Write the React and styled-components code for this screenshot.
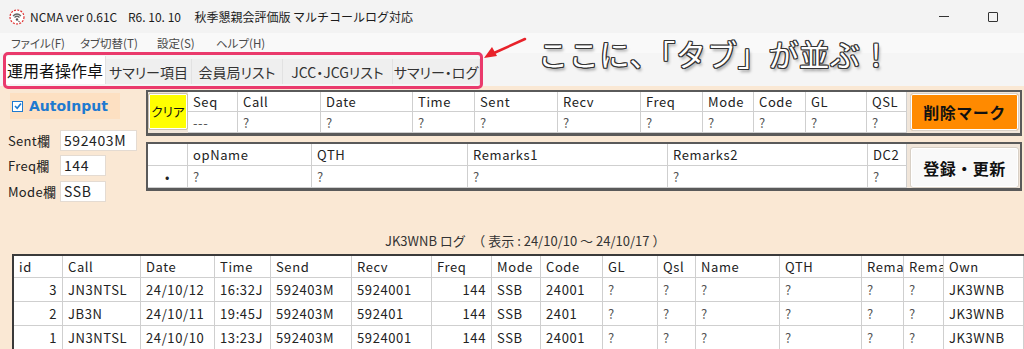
import React from "react";
import styled, { createGlobalStyle } from "styled-components";

const GlobalStyle = createGlobalStyle`
  html, body { margin: 0; padding: 0; }
  body {
    font-family: "Noto Sans CJK JP", "Noto Sans", sans-serif;
    background: #fae8d4;
  }
  * { box-sizing: border-box; }
`;

const Window = styled.div`
  position: relative;
  width: 1024px;
  height: 349px;
  overflow: hidden;
  display: flex;
  flex-direction: column;
  background: #fae8d4;
`;

const TitleBar = styled.div`
  height: 33px;
  flex-shrink: 0;
  display: flex;
  align-items: center;
  padding-left: 9px;
  background: #f3f3f3;
  font-size: 12px;
  color: #1b1b1b;
  white-space: pre;
`;

const TitleText = styled.span`
  margin-left: 5px;
`;

const Controls = styled.div`
  margin-left: auto;
  display: flex;
  height: 100%;
  margin-right: -42px;
`;

const CtrlBtn = styled.div`
  width: 49px;
  height: 100%;
  display: flex;
  align-items: center;
  justify-content: center;
`;

const MinLine = styled.div`
  width: 10px;
  height: 1px;
  background: #333;
`;

const MaxBox = styled.div`
  width: 10px;
  height: 10px;
  border: 1px solid #333;
  border-radius: 1px;
`;

const MenuBar = styled.div`
  height: 20px;
  flex-shrink: 0;
  display: flex;
  align-items: center;
  padding-left: 11px;
  background: #f9f9f9;
  font-size: 11.5px;
  color: #4a4a4a;
  font-feature-settings: "palt";
`;

const MenuItem = styled.span`
  width: ${(p) => p.w}px;
`;

const TabRow = styled.div`
  height: 33px;
  flex-shrink: 0;
  display: flex;
  align-items: flex-end;
  padding: 0 0 2px 5px;
  background: #f5f5f5;
`;

const Tab = styled.div`
  width: ${(p) => p.w}px;
  height: ${(p) => (p.active ? 28 : 25)}px;
  display: flex;
  align-items: center;
  justify-content: center;
  background: ${(p) => (p.active ? "#ffffff" : "#efefef")};
  border-right: 1px solid #e2e2e2;
  font-size: ${(p) => (p.active ? 16 : 14)}px;
  color: ${(p) => (p.active ? "#111" : "#333")};
  white-space: nowrap;
  font-feature-settings: "palt";
`;

const Content = styled.div`
  flex: 1;
  padding-top: 4px;
  background: #fae8d4;
  display: flex;
  flex-direction: column;
`;

const TopArea = styled.div`
  display: flex;
`;

const LeftPanel = styled.div`
  width: 146px;
  padding-left: 8px;
  display: flex;
  flex-direction: column;
`;

const AutoBox = styled.div`
  margin: 3px 0 0 2px;
  width: 110px;
  height: 26px;
  background: #fde0c2;
  display: flex;
  align-items: center;
  padding-left: 2px;
  color: #1f7ad0;
  font-family: "DejaVu Sans", sans-serif;
  font-weight: bold;
  font-size: 14px;
`;

const Check = styled.span`
  width: 11px;
  height: 11px;
  border: 1.5px solid #1f7ad0;
  background: #fff;
  margin-right: 6px;
  display: flex;
  align-items: center;
  justify-content: center;
`;

const FieldRow = styled.div`
  display: flex;
  align-items: center;
  margin-top: ${(p) => p.mt}px;
`;

const FieldLabel = styled.span`
  width: 52px;
  font-size: 13px;
  letter-spacing: 0.3px;
  color: #222;
  white-space: nowrap;
`;

const InputBox = styled.div`
  width: ${(p) => p.w}px;
  height: 21px;
  background: #fff;
  border: 1px solid #e4dbd2;
  font-size: 14px;
  letter-spacing: 0.6px;
  line-height: 19px;
  padding-left: 3px;
  color: #222;
`;

const GridCol = styled.div`
  width: 876px;
  display: flex;
  flex-direction: column;
`;

const EditGrid = styled.div`
  display: flex;
  border: 2px solid #5a5a5a;
  border-bottom-width: 3px;
  background: #f1e6da;
  margin-top: ${(p) => p.mt}px;
`;

const CellTable = styled.div`
  display: grid;
  grid-template-columns: ${(p) => p.cols};
  grid-auto-rows: ${(p) => p.rows};
  background: #fff;
`;

const Cell = styled.div`
  border-right: 1px solid #cfcfcf;
  border-bottom: 1px solid #cfcfcf;
  font-size: 13px;
  letter-spacing: 0.6px;
  color: ${(p) => (p.muted ? "#555" : "#222")};
  padding-left: 5px;
  display: flex;
  align-items: center;
  white-space: nowrap;
  overflow: hidden;
  justify-content: ${(p) => (p.right ? "flex-end" : "flex-start")};
  padding-right: ${(p) => (p.right ? 5 : 0)}px;
  ${(p) => p.center && "justify-content: center; padding-left: 0;"}
`;

const ClearBtn = styled.div`
  width: 40px;
  height: 37px;
  margin: 1px 0 0 0;
  background: #ffff00;
  border: 1px solid #c9c0b0;
  border-radius: 2px;
  box-shadow: inset 0 0 0 1px #fff;
  display: flex;
  align-items: center;
  justify-content: center;
  font-size: 12.5px;
  color: #111;
  font-feature-settings: "palt";
`;

const ActionBtn = styled.div`
  width: 109px;
  height: ${(p) => p.h}px;
  margin: ${(p) => p.mt}px 0 0 3px;
  background: ${(p) => p.bg};
  border: 1px solid #d8d0c6;
  border-radius: 3px;
  box-shadow: inset 0 0 0 1px #fff;
  display: flex;
  align-items: center;
  justify-content: center;
  font-size: 16px;
  font-weight: bold;
  color: #111;
  letter-spacing: 0.5px;
`;

const LogTitle = styled.div`
  margin-top: 30px;
  height: 18px;
  line-height: 18px;
  padding-left: 385px;
  font-size: 13px;
  color: #333;
  white-space: pre;
`;

const LogTable = styled.div`
  margin: 4px 0 0 12px;
  border-top: 2px solid #3a3a3a;
  border-left: 2px solid #3a3a3a;
  background: #fff;
  display: grid;
  grid-template-columns: 49px 78px 74px 56px 81px 80px 60px 49px 62px 55px 38px 84px 82px 42px 40px 80px;
  grid-template-rows: 22px 24px 24px 24px;
`;

const Callout = styled.div`
  position: absolute;
  left: 538px;
  top: 31px;
  font-size: 30px;
  color: #fff;
  letter-spacing: 0.8px;
  text-shadow: -1px -1px 0 #333, 1px -1px 0 #333, -1px 1px 0 #333, 1px 1px 0 #333,
    0 -1px 0 #333, 0 1px 0 #333, -1px 0 0 #333, 1px 0 0 #333, 2px 3px 3px rgba(0, 0, 0, 0.35);
  white-space: nowrap;
`;

const Highlight = styled.div`
  position: absolute;
  left: 3px;
  top: 52px;
  width: 480px;
  height: 37px;
  border: 3px solid #ea3a6c;
  border-radius: 5px;
`;

const Arrow = styled.svg`
  position: absolute;
  left: 480px;
  top: 34px;
`;

function AppIcon() {
  return (
    <svg width="16" height="16" viewBox="0 0 16 16">
      <circle cx="8" cy="8" r="7" fill="#fff" stroke="#e03030" strokeWidth="1.2" strokeDasharray="2 1.3" />
      <path d="M4 7 Q8 3 12 7" stroke="#666" strokeWidth="1.2" fill="none" />
      <path d="M5.5 8.5 Q8 6 10.5 8.5" stroke="#666" strokeWidth="1.2" fill="none" />
      <circle cx="8" cy="10.5" r="1.2" fill="#555" />
      <path d="M9 12 L11 13" stroke="#777" strokeWidth="1" />
    </svg>
  );
}

const grid1Cols = "50px 83px 92px 62px 83px 83px 62px 51px 52px 61px 40px";
const grid1Head = ["Seq", "Call", "Date", "Time", "Sent", "Recv", "Freq", "Mode", "Code", "GL", "QSL"];
const grid2Cols = "40px 124px 156px 200px 200px 39px";
const grid2Head = ["", "opName", "QTH", "Remarks1", "Remarks2", "DC2"];

const logHead = ["id", "Call", "Date", "Time", "Send", "Recv", "Freq", "Mode", "Code", "GL", "Qsl", "Name", "QTH", "Rema", "Rema", "Own"];
const logRows = [
  ["3", "JN3NTSL", "24/10/12", "16:32J", "592403M", "5924001", "144", "SSB", "24001"],
  ["2", "JB3N", "24/10/11", "19:45J", "592403M", "592401", "144", "SSB", "2401"],
  ["1", "JN3NTSL", "24/10/10", "13:23J", "592403M", "5924001", "144", "SSB", "24001"],
];

export default function App() {
  return (
    <Window>
      <GlobalStyle />
      <TitleBar>
        <AppIcon />
        <TitleText>NCMA ver 0.61C    R6. 10. 10     秋季懇親会評価版 マルチコールログ対応</TitleText>
        <Controls>
          <CtrlBtn><MinLine /></CtrlBtn>
          <CtrlBtn><MaxBox /></CtrlBtn>
          <CtrlBtn />
        </Controls>
      </TitleBar>
      <MenuBar>
        <MenuItem w={69}>ファイル(F)</MenuItem>
        <MenuItem w={77}>タブ切替(T)</MenuItem>
        <MenuItem w={59}>設定(S)</MenuItem>
        <MenuItem w={60}>ヘルプ(H)</MenuItem>
      </MenuBar>
      <TabRow>
        <Tab w={101} active>運用者操作卓</Tab>
        <Tab w={86}>サマリー項目</Tab>
        <Tab w={91}>会員局リスト</Tab>
        <Tab w={110}>JCC・JCGリスト</Tab>
        <Tab w={87}>サマリー・ログ</Tab>
      </TabRow>
      <Content>
        <TopArea>
          <LeftPanel>
            <AutoBox>
              <Check>
                <svg width="8" height="8" viewBox="0 0 8 8">
                  <path d="M1 4 L3.2 6.3 L7 1.5" stroke="#1f7ad0" strokeWidth="1.6" fill="none" />
                </svg>
              </Check>
              AutoInput
            </AutoBox>
            <FieldRow mt={11}>
              <FieldLabel>Sent欄</FieldLabel>
              <InputBox w={77}>592403M</InputBox>
            </FieldRow>
            <FieldRow mt={4}>
              <FieldLabel>Freq欄</FieldLabel>
              <InputBox w={46}>144</InputBox>
            </FieldRow>
            <FieldRow mt={5}>
              <FieldLabel>Mode欄</FieldLabel>
              <InputBox w={46}>SSB</InputBox>
            </FieldRow>
          </LeftPanel>
          <GridCol>
            <EditGrid mt={0}>
              <ClearBtn>クリア</ClearBtn>
              <CellTable cols={grid1Cols} rows="20px 21px">
                {grid1Head.map((h) => (
                  <Cell key={"h" + h}>{h}</Cell>
                ))}
                {grid1Head.map((h, i) => (
                  <Cell key={"v" + h} muted>{i === 0 ? "---" : "?"}</Cell>
                ))}
              </CellTable>
              <ActionBtn bg="#ff8a00" h={38} mt={1}>削除マーク</ActionBtn>
            </EditGrid>
            <EditGrid mt={6}>
              <CellTable cols={grid2Cols} rows="22px 22px">
                {grid2Head.map((h, i) => (
                  <Cell key={"h" + i}>{h}</Cell>
                ))}
                {grid2Head.map((h, i) =>
                  i === 0 ? (
                    <Cell key={"v" + i} center>•</Cell>
                  ) : (
                    <Cell key={"v" + i} muted>?</Cell>
                  )
                )}
              </CellTable>
              <ActionBtn bg="#f9f9f9" h={41} mt={3}>登録・更新</ActionBtn>
            </EditGrid>
          </GridCol>
        </TopArea>
        <LogTitle>JK3WNB ログ　（ 表示 : 24/10/10 ～ 24/10/17 ）</LogTitle>
        <LogTable>
          {logHead.map((h, i) => (
            <Cell key={"lh" + i}>{h}</Cell>
          ))}
          {logRows.map((r, ri) =>
            logHead.map((_, ci) => {
              const v = ci < r.length ? r[ci] : ci === 15 ? "JK3WNB" : "?";
              return (
                <Cell key={ri + "-" + ci} right={ci === 0 || ci === 6} muted={v === "?"}>
                  {v}
                </Cell>
              );
            })
          )}
        </LogTable>
      </Content>
      <Highlight />
      <Arrow width="50" height="30" viewBox="0 0 50 30">
        <line x1="45" y1="5" x2="14" y2="19" stroke="#e8222a" strokeWidth="2.5" strokeLinecap="round" />
        <polygon points="4,24 12,13 17,22" fill="#e8222a" />
      </Arrow>
      <Callout>ここに、「タブ」が並ぶ！</Callout>
    </Window>
  );
}
